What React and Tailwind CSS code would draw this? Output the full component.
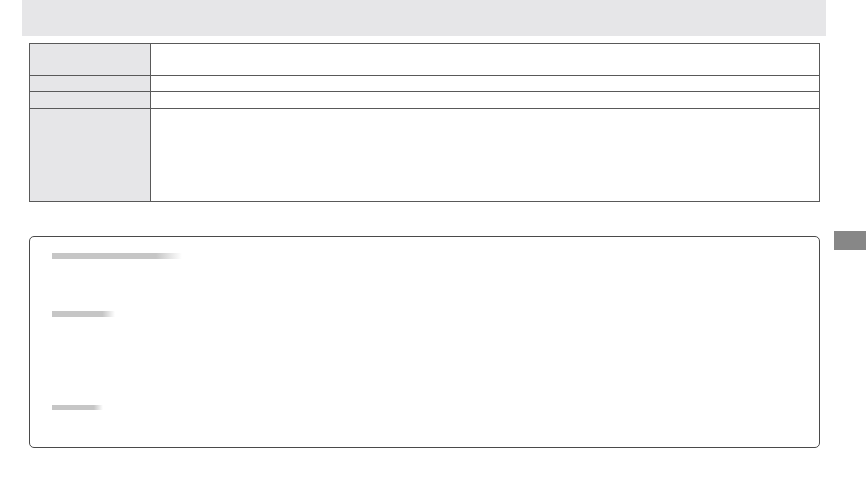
export default function App() {
  const rows = [
    { h: 'h-[31px]' },
    { h: 'h-[15px]' },
    { h: 'h-[16px]' },
    { h: 'h-[92px]' },
  ];

  return (
    <div className="relative w-[867px] h-[482px] bg-white overflow-hidden" style={{ fontFamily: '"Liberation Sans", Arial, sans-serif' }}>
      {/* Header band */}
      <div className="ml-[22px] w-[804px] h-[36px] bg-[#e6e6e8]" />

      {/* Spec table */}
      <div className="mt-[7px] ml-[29px] w-[791px] border-t border-l border-r border-[#595959]">
        {rows.map((row, i) => (
          <div key={i} className={`flex border-b border-[#595959] ${row.h} box-content`}>
            <div className="w-[120px] bg-[#e6e6e8] border-r border-[#595959] box-content" />
            <div className="flex-1" />
          </div>
        ))}
      </div>

      {/* Note box */}
      <div className="mt-[34px] ml-[29px] w-[791px] h-[212px] border border-[#4a4a4a] rounded-[5px] pt-[16px] pl-[22px]">
        <div className="w-[130px] h-[6px] bg-linear-to-r from-[#c6c6c6] from-80% to-white" />
        <div className="mt-[52px] w-[63px] h-[6px] bg-linear-to-r from-[#c6c6c6] from-80% to-white" />
        <div className="mt-[88px] w-[51px] h-[5px] bg-linear-to-r from-[#c6c6c6] from-82% to-white" />
      </div>

      {/* Side tab */}
      <div className="absolute left-[834px] top-[231px] w-[32px] h-[19px] bg-[#878787]" />
    </div>
  );
}
